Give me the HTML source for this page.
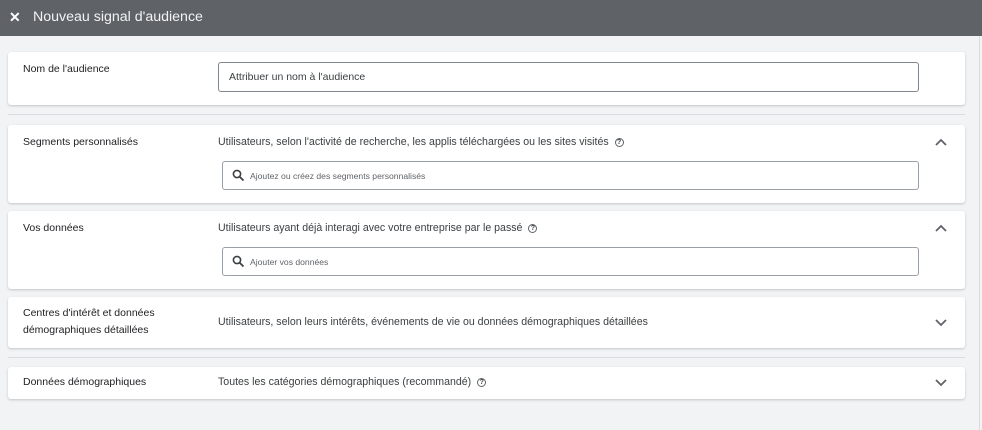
<!DOCTYPE html>
<html><head><meta charset="utf-8"><style>
*{box-sizing:border-box;margin:0;padding:0}
body{width:982px;height:430px;background:#f1f3f4;font-family:"Liberation Sans",Arial,sans-serif;color:#3c4043;position:relative;overflow:hidden}
.hdr{position:absolute;left:0;top:0;width:982px;height:36px;background:#5f6368;color:#fff}
.hdr .x{position:absolute;left:9px;top:9px;font-size:14px;font-weight:bold}
.hdr .t{position:absolute;left:33px;top:9px;font-size:14.2px;color:#f1f3f4}
.vline{position:absolute;left:979px;top:36px;width:1px;height:394px;background:#dadce0}
.card{position:absolute;left:8px;width:957px;background:#fff;border-radius:3px;box-shadow:0 1px 2px rgba(60,64,67,.25)}
.lbl{position:absolute;left:15px;font-size:10.5px;color:#202124;line-height:17px}
.desc{position:absolute;left:210px;font-size:10.6px;color:#3c4043}
.inp{position:absolute;left:214px;width:697px;height:29px;border:1px solid #9aa0a6;border-radius:3px;font-size:8.6px;color:#5f6368}
.inp span{position:absolute;left:27px;top:9px}
.inp svg{position:absolute;left:9px;top:7px}
.chev{position:absolute;left:927px}
.div{position:absolute;left:8px;width:957px;height:1px;background:#dadce0}
.help{display:inline-block;width:9px;height:9px;border:1.2px solid #5f6368;border-radius:50%;font-size:7px;line-height:7px;text-align:center;margin-left:6px;vertical-align:1px;font-weight:bold}
</style></head><body>
<div class="hdr"><span class="x">✕</span><span class="t">Nouveau signal d'audience</span></div>
<div class="vline"></div>

<div class="card" style="top:52px;height:53px">
<div class="lbl" style="top:9px">Nom de l'audience</div>
<div class="inp" style="left:210px;top:10px;width:701px;height:30px;border-color:#80868b;font-size:10.5px;color:#3c4043"><span style="left:10px;top:8px">Attribuer un nom à l'audience</span></div>
</div>
<div class="div" style="top:114px"></div>

<div class="card" style="top:125px;height:78px">
<div class="lbl" style="top:9px">Segments personnalisés</div>
<div class="desc" style="top:11px">Utilisateurs, selon l'activité de recherche, les applis téléchargées ou les sites visités<span class="help">?</span></div>
<svg class="chev" style="top:13px" width="12" height="8" viewBox="0 0 12 8"><path d="M1 7L6 2L11 7" stroke="#5f6368" stroke-width="1.8" fill="none"/></svg>
<div class="inp" style="top:36px"><svg width="13" height="13" viewBox="0 0 13 13"><circle cx="5" cy="5" r="3.6" stroke="#3c4043" stroke-width="1.6" fill="none"/><path d="M7.7 7.7L11.5 11.5" stroke="#3c4043" stroke-width="1.8"/></svg><span>Ajoutez ou créez des segments personnalisés</span></div>
</div>

<div class="card" style="top:211px;height:78px">
<div class="lbl" style="top:9px">Vos données</div>
<div class="desc" style="top:11px">Utilisateurs ayant déjà interagi avec votre entreprise par le passé<span class="help">?</span></div>
<svg class="chev" style="top:13px" width="12" height="8" viewBox="0 0 12 8"><path d="M1 7L6 2L11 7" stroke="#5f6368" stroke-width="1.8" fill="none"/></svg>
<div class="inp" style="top:36px"><svg width="13" height="13" viewBox="0 0 13 13"><circle cx="5" cy="5" r="3.6" stroke="#3c4043" stroke-width="1.6" fill="none"/><path d="M7.7 7.7L11.5 11.5" stroke="#3c4043" stroke-width="1.8"/></svg><span>Ajouter vos données</span></div>
</div>

<div class="card" style="top:297px;height:51px">
<div class="lbl" style="top:8px">Centres d'intérêt et données<br>démographiques détaillées</div>
<div class="desc" style="top:19px">Utilisateurs, selon leurs intérêts, événements de vie ou données démographiques détaillées</div>
<svg class="chev" style="top:22px" width="12" height="8" viewBox="0 0 12 8"><path d="M1 1L6 6L11 1" stroke="#5f6368" stroke-width="1.8" fill="none"/></svg>
</div>
<div class="div" style="top:357px"></div>

<div class="card" style="top:367px;height:32px">
<div class="lbl" style="top:7px">Données démographiques</div>
<div class="desc" style="top:9px">Toutes les catégories démographiques (recommandé)<span class="help">?</span></div>
<svg class="chev" style="top:12px" width="12" height="8" viewBox="0 0 12 8"><path d="M1 1L6 6L11 1" stroke="#5f6368" stroke-width="1.8" fill="none"/></svg>
</div>
</body></html>
